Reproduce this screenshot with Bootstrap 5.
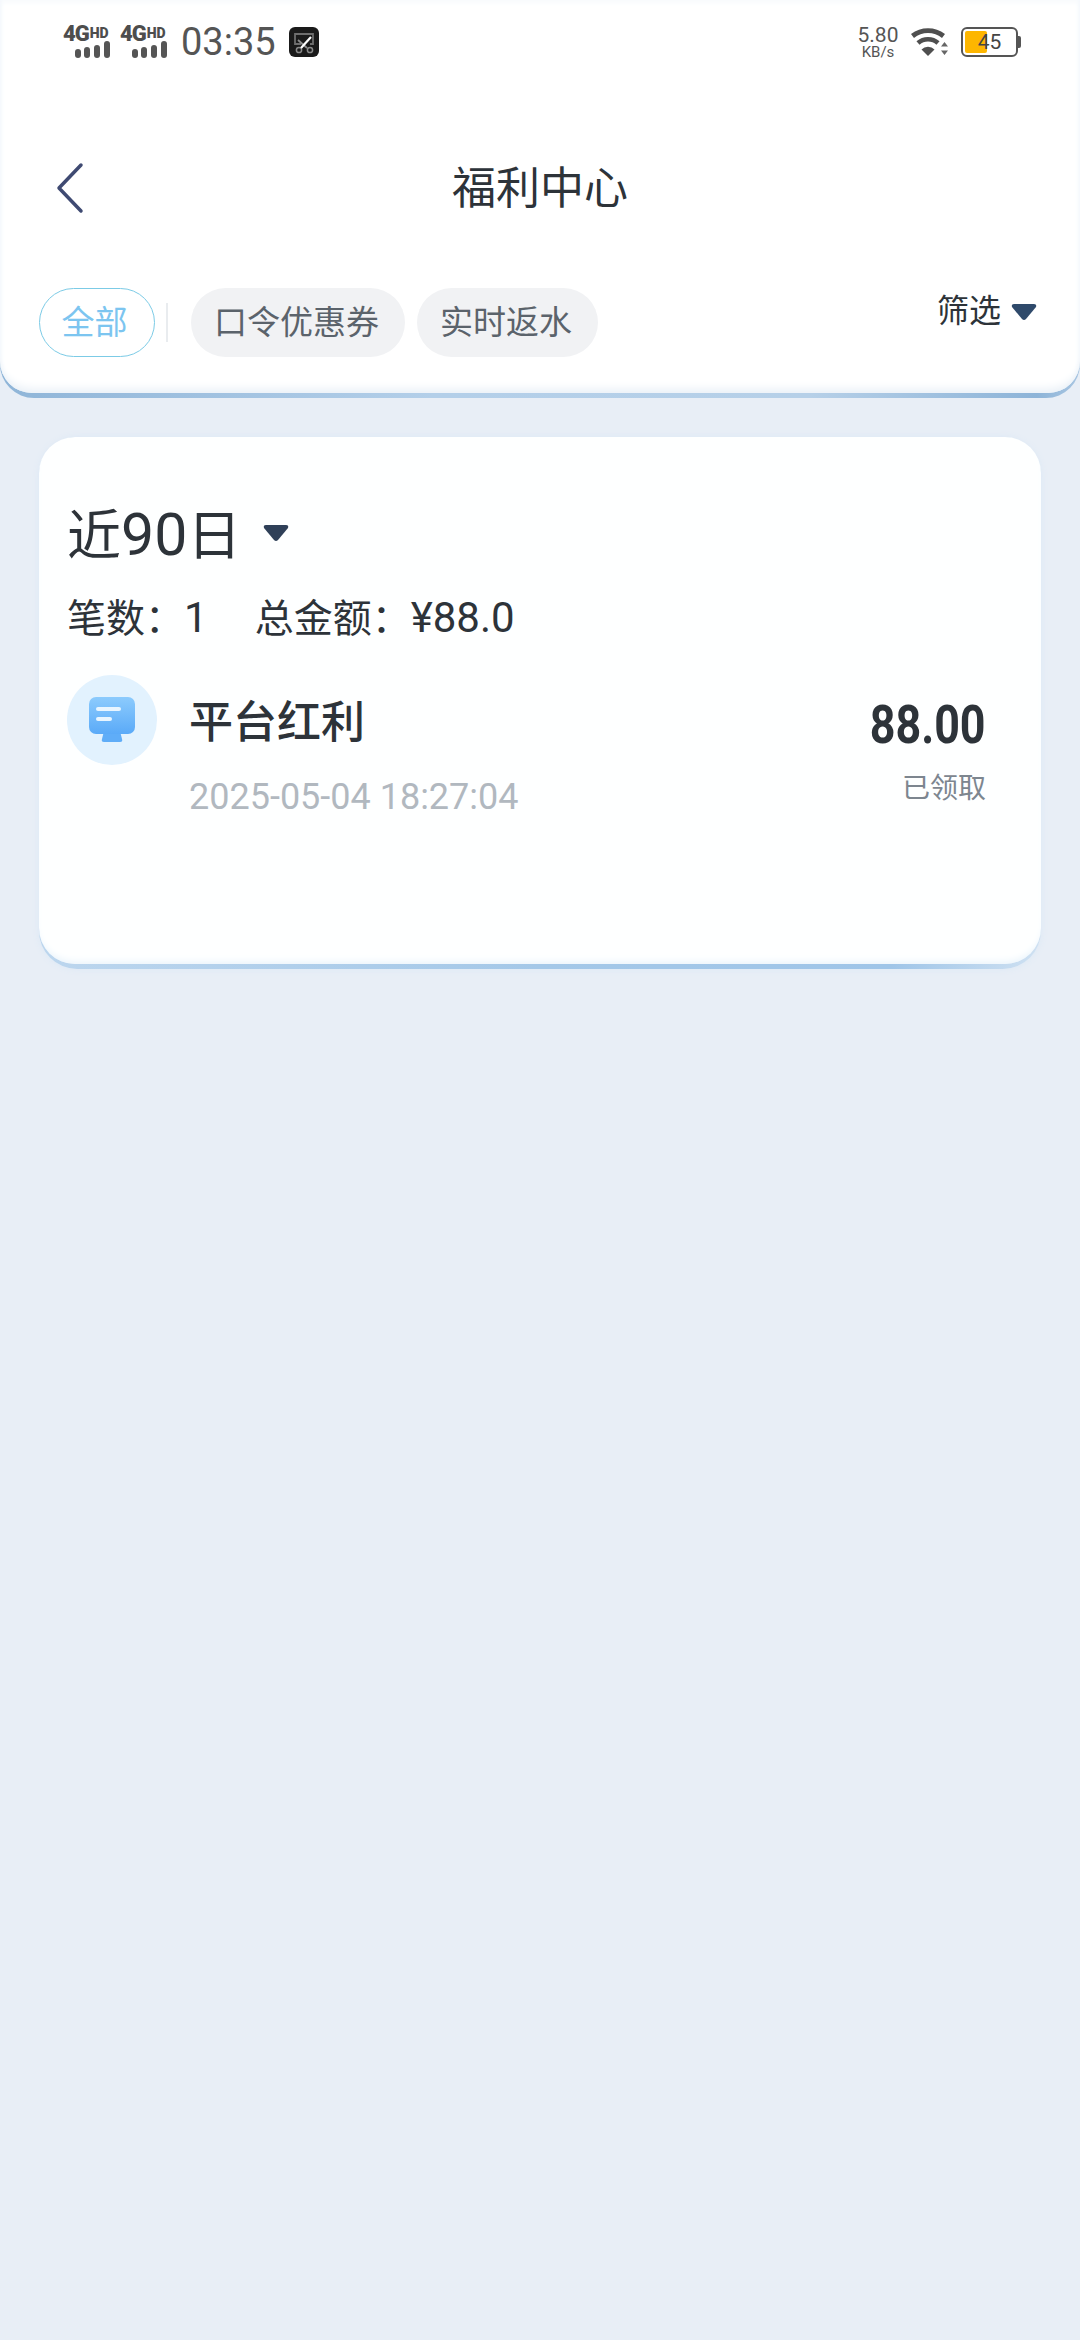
<!DOCTYPE html>
<html lang="zh-CN">

<head>
  <meta charset="UTF-8">
  <meta name="viewport" content="width=device-width, initial-scale=1.0">
  <title>福利中心</title>
  <link rel="stylesheet" href="https://cdn.jsdelivr.net/npm/bootstrap@5.3.0/dist/css/bootstrap.min.css">
  <style>
    body { background: #e8eef6; min-height: 2340px; font-family: Roboto, "Noto Sans CJK SC", sans-serif; color: #2d3339; }
    .edge-head { padding-bottom: 5px; border-radius: 0 0 34px 34px; background: linear-gradient(90deg, #8fb5d8 0%, #b3cfe9 40%, #b6d0e8 75%, #8db4d8 96%, #a9c6e2 100%); }
    .head-inner { background: #fff; border-radius: 0 0 32px 32px; height: 393px; box-shadow: inset 0 -10px 10px -6px #e9f0f7, inset 0 6px 6px -4px #f6f9fc, inset 5px 0 5px -4px #f1f6fb, inset -5px 0 5px -4px #f1f6fb; }
    .status-row { height: 84px; padding-left: 63px; padding-right: 59px; color: #555; }
    .sig-block { width: 47px; height: 33px; margin-right: 10px; color: #4d4d4d; font-weight: 900; white-space: nowrap; }
    .sig-text { height: 15px; line-height: 15px; }
    .sig-g { font-size: 22px; letter-spacing: -1px; }
    .sig-hd { font-size: 14px; vertical-align: 3px; margin-left: 1px; }
    .sig-bars { width: 35px; height: 17px; margin-left: 12px; margin-top: 0; }
    .clock { font-size: 38px; line-height: 1; margin-left: 4px; }
    .app-icon { width: 30px; height: 30px; margin-left: 13px; }
    .speed { width: 42px; margin-right: 11px; margin-top: 2px; text-align: center; }
    .speed-top { font-size: 21px; line-height: 18px; }
    .speed-unit { font-size: 15px; line-height: 16px; }
    .wifi-icon { width: 38px; height: 30px; margin-right: 13px; }
    .batt-box { width: 57px; height: 30px; position: relative; font-size: 21px; line-height: 26px; color: #444; text-align: center; border: 2px solid #555; border-radius: 6px; }
    .batt-fill { position: absolute; left: 2px; top: 2px; bottom: 2px; width: 22px; background: #fdb600; border-radius: 2px; }
    .batt-num { position: relative; }
    .batt-tip { width: 3px; height: 12px; background: #555; border-radius: 0 2px 2px 0; }
    .title-row { height: 204px; padding-left: 55px; padding-top: 4px; }
    .back-icon { width: 30px; height: 52px; }
    .page-name { font-size: 44px; line-height: 1; margin-left: 367px; margin-top: 2px; }
    .chip-row { padding: 0 43px 0 39px; }
    .chip-btn { height: 69px; font-size: 33px; line-height: 1; padding: 0 26px 0 23px; border: 0; background: #f1f2f4; color: #5b636b; margin-right: 12px; white-space: nowrap; }
    .chip-on { width: 116px; padding: 0 5px 0 0; background: #fff; border: 1px solid #7ccbe6; color: #7cc5f0; margin-right: 0; }
    .chip-tail { padding: 0 26px 0 23px; }
    .chip-sep { width: 2px; height: 39px; background: #e9ecef; margin: 0 23px 0 11px; }
    .filter-btn { font-size: 32px; line-height: 44px; margin-top: 1px; }
    .caret-icon { width: 26px; height: 18px; margin-left: 10px; margin-top: 2px; }
    .edge-card { margin: 39px 39px 0; padding-bottom: 5px; border-radius: 38px; background: linear-gradient(90deg, #bcd6ee 0%, #a4c8e8 50%, #9fc5e8 85%, #cfe1f2 100%); box-shadow: 0 0 7px #dbe8f5; }
    .card-inner { background: #feffff; border: 0; border-radius: 36px; height: 527px; padding: 62px 55px 0 28px; box-shadow: inset 0 -6px 8px -5px #e4f0fa; color: #2d3339; }
    .range-row { height: 70px; margin-bottom: 24px; }
    .range-name { font-size: 54px; line-height: 1; }
    .range-num { font-size: 59px; }
    .range-caret { width: 26px; height: 18px; margin-left: 22px; margin-top: -2px; }
    .stat-row { font-size: 39px; line-height: 50px; margin-bottom: 31px; }
    .stat-num { font-size: 42px; }
    .stat-gap { margin-left: 47px; }
    .rec-icon { width: 90px; height: 90px; background: #e2f2fe; margin-right: 32px; }
    .rec-icon svg { width: 50px; height: 50px; }
    .rec-name { font-size: 44px; line-height: 50px; font-weight: 500; margin-top: 23px; margin-bottom: 27px; }
    .rec-time { font-size: 36px; line-height: 44px; color: #b1b8bf; white-space: nowrap; }
    .rec-money { font-size: 54px; line-height: 50px; font-weight: 700; margin-top: 25px; transform: scaleX(.83); transform-origin: right center; }
    .rec-state { font-size: 28px; line-height: 40px; color: #7d868f; margin-top: 19px; }
  </style>
</head>

<body>
  <div class="edge-head">
    <div class="head-inner">
      <div class="status-row d-flex align-items-center">
        <div class="sig-block">
          <div class="sig-text"><span class="sig-g">4G</span><span class="sig-hd">HD</span></div>
          <svg class="sig-bars d-block" viewBox="0 0 35 17">
            <rect x="0" y="8" width="6" height="9" rx="3" fill="#555"/><rect x="9" y="6" width="6" height="11" rx="3" fill="#555"/><rect x="19" y="4" width="6" height="13" rx="3" fill="#555"/><rect x="29" y="0" width="6" height="17" rx="3" fill="#555"/>
          </svg>
        </div>
        <div class="sig-block">
          <div class="sig-text"><span class="sig-g">4G</span><span class="sig-hd">HD</span></div>
          <svg class="sig-bars d-block" viewBox="0 0 35 17">
            <rect x="0" y="8" width="6" height="9" rx="3" fill="#555"/><rect x="9" y="6" width="6" height="11" rx="3" fill="#555"/><rect x="19" y="4" width="6" height="13" rx="3" fill="#555"/><rect x="29" y="0" width="6" height="17" rx="3" fill="#555"/>
          </svg>
        </div>
        <span class="clock">03:35</span>
        <svg class="app-icon" viewBox="0 0 30 30">
          <rect width="30" height="30" rx="6" fill="#1a1a1a"/>
          <path d="M12 17H6V7h18v10h-3" fill="none" stroke="#6e6e6e" stroke-width="1.800"/>
          <circle cx="10" cy="23" r="2.600" fill="none" stroke="#8a8a8a" stroke-width="1.500"/><circle cx="21" cy="23" r="2.600" fill="none" stroke="#8a8a8a" stroke-width="1.500"/>
          <path d="M9 13l9 8" stroke="#8a8a8a" stroke-width="1.800"/>
          <path d="M12 21 22 10" stroke="#fff" stroke-width="2.200"/>
        </svg>
        <div class="ms-auto speed">
          <div class="speed-top">5.80</div>
          <div class="speed-unit">KB/s</div>
        </div>
        <svg class="wifi-icon" viewBox="0 0 38 30">
          <path d="M2.500 9a25 25 0 0 1 31 0" fill="none" stroke="#4f4f4f" stroke-width="4.800"/>
          <path d="M8 16a15 15 0 0 1 20 0" fill="none" stroke="#4f4f4f" stroke-width="4.600"/>
          <path d="M18 29l-6.500-6.500a9 9 0 0 1 13 0z" fill="#4f4f4f"/>
          <path d="M34.500 15l3.500 4.500h-7zM34.500 28l-3.500-4.500h7z" fill="#666"/>
        </svg>
        <div class="batt-box">
          <div class="batt-fill"></div>
          <span class="batt-num">45</span>
        </div>
        <div class="batt-tip"></div>
      </div>

      <div class="title-row d-flex align-items-center">
        <svg class="back-icon" viewBox="0 0 30 52">
          <path d="M26 3 4 26l22 23" fill="none" stroke="#3f4a72" stroke-width="3.500" stroke-linecap="round" stroke-linejoin="round"/>
        </svg>
        <div class="page-name">福利中心</div>
      </div>

      <div class="chip-row d-flex align-items-start">
        <button class="btn rounded-pill chip-btn chip-on" type="button">全部</button>
        <div class="chip-sep align-self-center"></div>
        <button class="btn rounded-pill chip-btn" type="button">口令优惠券</button>
        <button class="btn rounded-pill chip-btn chip-tail" type="button">实时返水</button>
        <div class="ms-auto d-flex align-items-center filter-btn">
          筛选
          <svg class="caret-icon" viewBox="0 0 26 18">
            <path d="M3 1h20q3 0 2 3L15 16q-2 2-4 0L1 4Q0 1 3 1z" fill="#2f4a6b"/>
          </svg>
        </div>
      </div>
    </div>
  </div>

  <div class="edge-card">
    <div class="card card-inner">
      <div class="range-row d-flex align-items-center">
        <span class="range-name">近<span class="range-num">90</span>日</span>
        <svg class="range-caret" viewBox="0 0 26 18">
          <path d="M3 1h20q3 0 2 3L15 16q-2 2-4 0L1 4Q0 1 3 1z" fill="#2f4058"/>
        </svg>
      </div>
      <div class="stat-row">
        <span>笔数：<span class="stat-num">1</span></span><span class="stat-gap">总金额：<span class="stat-num">¥88.0</span></span>
      </div>
      <div class="d-flex align-items-start">
        <div class="rec-icon rounded-circle d-flex align-items-center justify-content-center flex-shrink-0">
          <svg viewBox="0 0 50 50">
            <defs>
              <linearGradient id="screenFill" x1="0" y1="0" x2="0" y2="1">
                <stop offset="0" stop-color="#8ccbfd"/>
                <stop offset="1" stop-color="#5aaaf8"/>
              </linearGradient>
            </defs>
            <path d="M17 36h16l2 8q1 3-2 3H17q-3 0-2-3z" fill="#5fadf8"/>
            <rect x="2" y="2" width="46" height="37" rx="7" fill="url(#screenFill)"/>
            <rect x="9" y="12" width="25" height="4" rx="2" fill="#e8f5ff"/>
            <rect x="9" y="22" width="16" height="4" rx="2" fill="#e8f5ff"/>
          </svg>
        </div>
        <div class="flex-grow-1">
          <div class="rec-name">平台红利</div>
          <div class="rec-time">2025-05-04 18:27:04</div>
        </div>
        <div class="text-end">
          <div class="rec-money">88.00</div>
          <div class="rec-state">已领取</div>
        </div>
      </div>
    </div>
  </div>

  <script src="https://cdn.jsdelivr.net/npm/bootstrap@5.3.0/dist/js/bootstrap.bundle.min.js"></script>
</body>

</html>
